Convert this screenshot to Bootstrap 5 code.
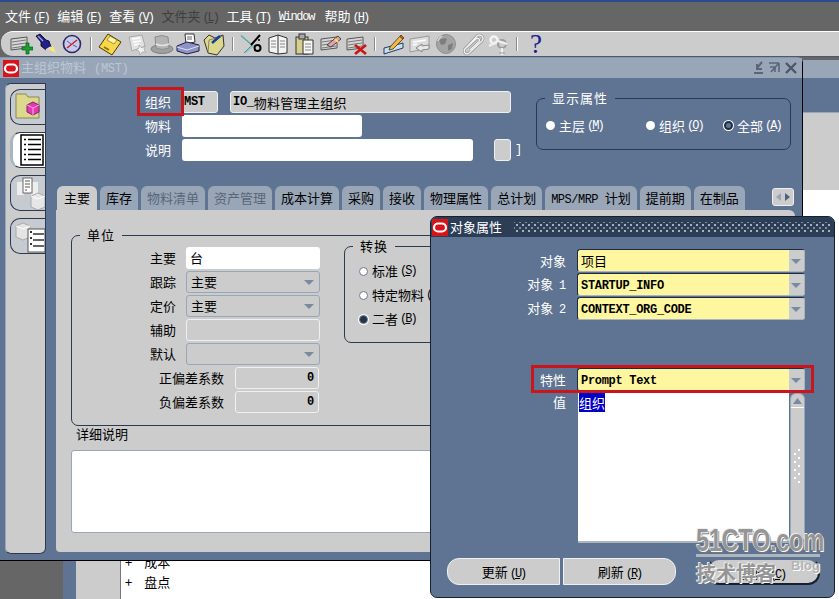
<!DOCTYPE html>
<html lang="zh-CN">
<head>
<meta charset="UTF-8">
<title>主组织物料 (MST)</title>
<link href="https://cdn.jsdelivr.net/npm/bootstrap@5.3.0/dist/css/bootstrap.min.css" rel="stylesheet">
<style>
    html, body { margin: 0; background: #666; }
    body { font: 13px/1.2 "Noto Sans CJK SC", "Liberation Sans", sans-serif; color: #000; }
    .stage { position: relative; width: 839px; height: 599px; overflow: hidden; background: #666; }
    .lat { font-family: "Liberation Mono", "Noto Sans CJK SC", monospace; font-size: 12px; letter-spacing: -.3px; }
    .latb { font-weight: 700; }
    .hk { font-family: "Liberation Mono", monospace; font-size: 12px; letter-spacing: -2px; margin-left: 2px; }

    /* top bars */
    .menubar { height: 31px; border-top: 2px solid #2a4a8c; background: #666; color: #fff; padding-left: 5px; gap: 8.5px; }
    .menubar .off { color: #3e3e3e; }
    .menubar .win { font-family: "Liberation Mono", monospace; font-size: 12px; letter-spacing: -1.3px; padding-top: 2px; margin-right: 2px; }
    .toolstrip { height: 26px; margin-left: 1px; padding-left: 6px; background: #ccc; border-top: 1px solid #fff; border-bottom: 1px solid #4b5a70; border-radius: 12px 0 0 12px; }
    .tool { width: 26px; height: 24px; flex: none; }
    .toolsep { width: 12px; height: 24px; flex: none; position: relative; }
    .toolsep::after { content: ""; position: absolute; left: 5px; top: 5px; height: 14px; width: 2px; background: #fff; border-left: 1px solid #8a8a8a; }
    .helpmark { width: 26px; text-align: center; font: 27px/24px "Liberation Serif", serif; color: #1c1c8e; }

    /* windows on the desktop */
    .backwin { position: absolute; left: 63px; top: 57px; width: 776px; height: 542px; }
    .backtitle { height: 21px; background: #98a6b8; border-top: 3px solid #666; }
    .backblue { height: 35px; background: #5f7492; border-bottom: 1px solid #98a6b8; }
    .backgray { height: 77px; background: #ccc; }
    .backrest { height: 409px; }
    .backrest .b1 { width: 13px; background: #5f7492; }
    .backrest .b2 { width: 45px; background: #ccc; border-right: 1px solid #777; }
    .backrest .b3 { flex: 1; background: #fff; padding-bottom: 7px; }
    .treerow { height: 20px; padding-left: 4px; gap: 12px; }

    .mainwin { position: absolute; left: 0; top: 57px; width: 803px; height: 504px; background: #5f7492; border-right: 1px solid #000; border-bottom: 1px solid #000; border-top: 1px solid #8796ab; border-radius: 0 6px 0 0; }
    .mtitle { height: 20px; background: #98a6b8; color: #bcc6d3; padding-left: 3px; gap: 2px; }
    .oralogo { width: 16px; height: 17px; background: #d6141a; flex: none; }
    .sidestrip { width: 41px; height: 471px; margin: 5px 0 0 5px; background: #ccc; border: 1px solid #2b3a50; border-left-color: #98a6b8; border-radius: 6px 0 6px 6px; padding: 5px 0 0 4px; gap: 7px; flex: none; }
    .sidetab { height: 36px; background: #c6cbd1; border: 1px solid #2b3a50; border-right: 0; border-radius: 10px 0 0 10px; overflow: hidden; }
    .sidetab.cur { background: #fff; border-left: 3px solid #aab4c0; }
    .rightcol { width: 744px; margin-left: 10px; flex: none; }
    .headarea { height: 108px; }
    .headform { width: 399px; padding: 13px 0 0 0; margin-left: 81px; gap: 2px; flex: none; }
    .headrow { height: 22px; }
    .headlbl { width: 45px; padding-left: 8px; color: #fff; flex: none; }
    .fld { height: 22px; border-radius: 3px; padding: 0 4px; flex: none; overflow: hidden; white-space: nowrap; }
    .f-ro { background: #ccc; border: 1px solid #eef0f2; }
    .f-white { background: #fff; }
    .f-drop { background: #ccc; border: 1px solid #98a6b8; position: relative; }
    .f-drop::after, .yarrow::after { content: ""; position: absolute; right: 5px; top: 8px; border: 5px solid transparent; border-top: 5px solid #7889a0; border-bottom: 0; }
    .w-org { width: 36px; padding-left: 1px; }
    .w-orgname { width: 281px; margin-left: 12px; padding-left: 2px; }
    .cjk-sp { font: 13px "Noto Sans CJK SC", sans-serif; letter-spacing: .3px; }
    .w-item { width: 180px; }
    .w-desc { width: 291px; }
    .w-flex { width: 17px; margin-left: 21px; }
    .w-unit { width: 134px; }
    .w-num { width: 84px; margin-left: 1px; }
    .propbox { position: relative; width: 255px; height: 52px; margin: 20px 0 0 0; border: 1px solid #2b3a50; border-radius: 7px; color: #fff; padding: 19px 0 0 9px; }
    .boxcap { position: absolute; left: 8px; top: -10px; padding: 0 7px; line-height: 18px; letter-spacing: 1px; }
    .propbox .boxcap { background: #5f7492; }
    .opt1 { width: 100px; }
    .opt2 { width: 78px; }
    .rad { width: 9px; height: 9px; border-radius: 50%; background: #fff; flex: none; margin-right: 4px; }
    .rad.on { background: #24344c; box-shadow: 0 0 0 1px #fff; }
    .propbox .rad.on { background: #5f7492; border: 2px solid #1d2b40; box-shadow: 0 0 0 1px #fff; }
    .gr .rad { border: 1px solid #6f7c8c; background: #fff; }
    .gr .rad.on { background: #24344c; box-shadow: inset 0 0 0 1px #24344c, 0 0 0 1px #fff; }

    .nav.tabrow { gap: 3px; height: 24px; padding-left: 1px; border: 0; flex-wrap: nowrap; }
    .tabrow .nav-link { height: 24px; padding: 3px 6px 0; margin: 0; background: #98a6b8; color: #000; border: 0; border-radius: 6px 6px 0 0; font-size: 13px; line-height: 18px; white-space: nowrap; }
    .tabrow .nav-link.active { background: #ccc; color: #000; padding: 3px 7px 0; }
    .nav-tabs.tabrow .nav-link.disabled { background: #98a6b8; color: #5a6678; }
    .mrp { letter-spacing: -.5px; }
    .tabscroll { width: 22px; height: 18px; margin: 2px 0 0 24px; background: #ccc; border: 1px solid #eef0f2; border-radius: 3px; flex: none; }
    .tabpanel { width: 739px; height: 342px; background: #ccc; border-radius: 0 6px 0 4px; padding: 25px 0 0 15px; }
    .gr { position: relative; border: 1px solid #2b3a50; border-radius: 7px; }
    .gr .boxcap { background: #ccc; }
    .unitbox { width: 724px; height: 191px; padding: 11px 0 0 0; }
    .urow { height: 22px; gap: 10px; margin-bottom: 2px; }
    .ulbl { width: 104px; text-align: right; flex: none; }
    .ulbl2 { width: 152px; text-align: right; flex: none; }
    .convbox { width: 300px; height: 97px; margin: -1px 0 0 24px; padding: 15px 0 0 14px; }
    .convrow { height: 18px; margin-bottom: 6px; }
    .notelbl { height: 18px; margin: 0 0 6px 5px; }
    .notearea { width: 719px; height: 83px; background: #fff; border: 1px solid #98a6b8; border-radius: 3px; }

    .dialog { position: absolute; left: 430px; top: 216px; width: 405px; height: 382px; background: #5f7492; border: 1px solid #16202e; border-radius: 7px; overflow: hidden; }
    .dtitle { height: 20px; background: #2c3e55; color: #fff; gap: 2px; padding-left: 1px; }
    .dots { flex: 1; height: 10px; margin: 0 4px 0 10px; background-image: radial-gradient(circle, #a8b0ba 0.9px, transparent 1.1px), radial-gradient(circle, #7e8a99 0.9px, transparent 1.1px); background-size: 6px 6px; background-position: 0 0, 3px 3px; }
    .dbody { padding-top: 12px; }
    .drow { height: 23px; margin-bottom: 1px; gap: 11px; }
    .drow-gap { margin-top: 48px; }
    .dlbl { width: 135px; text-align: right; color: #fff; flex: none; }
    .dlbl .lat { margin-left: 3px; }
    .yfld { position: relative; width: 228px; height: 23px; background: #fff7a0; border: 1px solid #1d2b40; border-bottom-color: #aab4c0; border-right-color: #aab4c0; border-radius: 3px; padding-left: 3px; overflow: hidden; }
    .yfld.lat { padding-top: 3px; }
    .yarrow { position: absolute; right: 0; top: 0; width: 15px; height: 23px; background: #ccc; }
    .yarrow::after { right: 3px; top: 9px; }
    .valrow { gap: 12px; margin-top: 2px; }
    .valrow .dlbl { padding-top: 1px; }
    .valarea { width: 211px; height: 150px; background: #fff; padding: 0 0 0 1px; border-bottom: 2px solid #aab4c0; flex: none; }
    .selval { background: #0000c8; color: #fff; display: inline-block; line-height: 19px; }
    .scrollcol { width: 15px; height: 147px; background: #ccc; border: 1px solid #98a6b8; border-radius: 6px 6px 0 0; margin-left: 1px; flex: none; }
    .scrolltop { height: 14px; border-bottom: 1px solid #fff; }
    .grip { margin-top: 41px; }
    .dbtnrow { padding: 15px 0 0 16px; }
    .dbtn.btn { height: 27px; width: 113px; padding: 0; background: #ccc; color: #000; border: 1px solid #eef0f2; font-size: 13px; line-height: 25px; }
    .btn-l { border-radius: 12px 0 0 12px; }
    .btn-r { border-radius: 0 12px 12px 0; margin-left: 3px; }
    .btn.btn-x { border-radius: 12px; margin-left: 31px; border: 2px solid #16202e; border-top-color: #5f7492; }

    .redmark { position: absolute; border: 3px solid #c8161c; pointer-events: none; }
    .rm1 { left: 137px; top: 87px; width: 47px; height: 29px; }
    .rm2 { left: 531px; top: 365px; width: 283px; height: 28px; }
    .wm { position: absolute; left: 696px; top: 526px; width: 124px; color: #959595; font-family: "Liberation Sans", sans-serif; font-weight: 700; pointer-events: none; }
    .wm1 { font-size: 32px; line-height: 28px; letter-spacing: -.5px; transform: scaleX(.74); transform-origin: left center; text-shadow: 1px 1px 0 #fff, -1px -1px 0 #eee, 2px 2px 0 #777; white-space: nowrap; }
    .wmline { height: 3px; background: #aeb6c0; margin-top: 0; }
    .wm2 { position: relative; font: 700 20px/26px "Noto Sans CJK SC", sans-serif; text-shadow: 1px 1px 0 #fff, -1px -1px 0 #eee; margin-top: 3px; white-space: nowrap; letter-spacing: 0; }
    .wmblog { position: absolute; right: 0; top: -3px; font: 700 13px/18px "Liberation Sans", sans-serif; color: #b4b4b4; text-shadow: 1px 1px 0 #fff; }
</style>
</head>
<body>
<svg width="0" height="0" class="position-absolute">
    <symbol id="sheet" viewBox="0 0 26 24"><path d="M4 7 L20 5 V16 L4 18Z" fill="#d6d6d6" stroke="#555"/><path d="M5 10 L19 8 M5 13 L19 11 M5 16 L19 14" stroke="#777"/></symbol>
</svg>
<div class="stage">
    <div class="menubar d-flex align-items-center">
        <span>文件<span class="hk">(<u>F</u>)</span></span>
        <span>编辑<span class="hk">(<u>E</u>)</span></span>
        <span>查看<span class="hk">(<u>V</u>)</span></span>
        <span class="off">文件夹<span class="hk">(<u>L</u>)</span></span>
        <span>工具<span class="hk">(<u>T</u>)</span></span>
        <span class="win"><u>W</u>indow</span>
        <span>帮助<span class="hk">(<u>H</u>)</span></span>
    </div>
    <div class="toolstrip d-flex align-items-center">
        <svg class="tool" viewBox="0 0 26 24"><use href="#sheet"/><path d="M19 11h3v4h4v3h-4v4h-3v-4h-4v-3h4z" fill="#18a030" stroke="#0a5a18" stroke-width=".7"/></svg>
        <svg class="tool" viewBox="0 0 26 24"><path d="M15 17 L23 21 L20 14Z" fill="#ffe96a"/><path d="M3 4 L7 2 L13 8 L16 9 L18 15 L13 18 L8 14 L8 10Z" fill="#20208a" stroke="#000" stroke-width=".8"/><path d="M5 4 L10 9" stroke="#9aa6e8" stroke-width="1.4"/><path d="M13 18 L18 15" stroke="#ddd" stroke-width="1.6"/></svg>
        <svg class="tool" viewBox="0 0 26 24"><circle cx="13" cy="12" r="8.5" fill="#c8cce8" stroke="#2a2a6a" stroke-width="1.6"/><path d="M8 16 L18 8" stroke="#d02030" stroke-width="1.6"/><path d="M8 9 L12 12 M14 13 L18 15" stroke="#5a5a9a"/></svg>
        <span class="toolsep"></span>
        <svg class="tool" viewBox="0 0 26 24"><path d="M11 2 L24 10 L15 23 L2 15Z" fill="#f8d84a" stroke="#4a3a00"/><path d="M13 4 L20 8 L17 12 L10 8Z" fill="#fff3a8" stroke="#6a5a10" stroke-width=".6"/><path d="M7 15 L12 18" stroke="#8a7410" stroke-width="2"/></svg>
        <svg class="tool" viewBox="0 0 26 24"><path d="M6 5 L19 3 L22 14 L9 19Z" fill="#e2e2e2" stroke="#aaa"/><path d="M9 7l8-1M10 10l8-1M11 13l5-1" stroke="#fff" stroke-width="1.4"/><path d="M16 13l3 3 3-2-1 4 2 2-4 0-2 3-1-4-3-1 3-2z" fill="#f2f2f2" stroke="#999" stroke-width=".6"/></svg>
        <svg class="tool" viewBox="0 0 26 24"><ellipse cx="13" cy="17" rx="11" ry="4.5" fill="#a0a0a0" stroke="#808080"/><path d="M6 5 Q13 2 19 5 L20 16 Q13 19 7 16Z" fill="#b4b4b4" stroke="#8c8c8c"/><path d="M7 12 Q13 15 20 12" stroke="#e4e4e4" stroke-width="1.5" fill="none"/></svg>
        <svg class="tool" viewBox="0 0 26 24"><path d="M10 2 L19 2 L20 10 L11 12Z" fill="#fff" stroke="#333"/><path d="M12 5h5M12 7h5" stroke="#666"/><path d="M2 14 L12 10 L24 13 L24 19 L12 22 L2 19Z" fill="#8f93c4" stroke="#1c1c50"/><path d="M2 15 L12 18 L24 14" stroke="#e0e0f0" fill="none"/></svg>
        <svg class="tool" viewBox="0 0 26 24"><path d="M3 8 L8 3 L14 6 L22 3 L23 14 L16 23 L7 21Z" fill="#dcd88e" stroke="#333"/><path d="M7 21 L8 8 L22 4" stroke="#8c8850" fill="none"/><path d="M11 11 L19 4" stroke="#1a3c9a" stroke-width="2.6"/></svg>
        <span class="toolsep"></span>
        <svg class="tool" viewBox="0 0 26 24"><path d="M2 3 L14 14 L6 21" stroke="#7fc8c8" stroke-width="1.6" fill="none"/><path d="M2 4 L13 13 L5 21" stroke="#2a6a70" stroke-width=".6" fill="none"/><path d="M21 3 L12 13" stroke="#000" stroke-width="2"/><circle cx="18.500" cy="16" r="3" fill="none" stroke="#000" stroke-width="2"/><circle cx="20" cy="8" r="1" fill="#000"/></svg>
        <svg class="tool" viewBox="0 0 26 24"><path d="M4 6 L13 3 L22 6 V21 L13 22 L4 20Z" fill="#f4f4f4" stroke="#333"/><path d="M13 3 V22" stroke="#333"/><path d="M6 9h5M6 12h5M6 15h5M15 9h5M15 12h5M15 15h5" stroke="#888"/></svg>
        <svg class="tool" viewBox="0 0 26 24"><rect x="5" y="5" width="12" height="17" fill="#d6d08a" stroke="#333"/><rect x="8" y="2" width="6" height="5" fill="#aaa" stroke="#333"/><path d="M12 8 H22 V22 H12Z" fill="#f6f6f6" stroke="#333"/><path d="M14 12h6M14 15h6M14 18h6" stroke="#888"/></svg>
        <svg class="tool" viewBox="0 0 26 24"><use href="#sheet"/><path d="M10 13 L21 4 L24 7 L14 15Z" fill="#e8a0a8" stroke="#444"/><path d="M18 7 L21 10" stroke="#ffe050" stroke-width="2"/></svg>
        <svg class="tool" viewBox="0 0 26 24"><use href="#sheet"/><path d="M12 13 L23 22 M23 13 L12 22" stroke="#c81818" stroke-width="2.8"/></svg>
        <span class="toolsep"></span>
        <svg class="tool" viewBox="0 0 26 24"><path d="M3 16 L22 11 V16 L3 22Z" fill="#c8e0e8" stroke="#1c3c6a"/><path d="M9 15 L20 3 L23 6 L12 17 L8 18Z" fill="#f4b840" stroke="#333" stroke-width=".8"/><path d="M19 4 L22 7" stroke="#a04010" stroke-width="1.6"/></svg>
        <svg class="tool" viewBox="0 0 26 24"><path d="M3 7 L22 4 V16 L3 20Z" fill="#dcdcdc" stroke="#999"/><path d="M6 10 L19 8 M6 13 L10 12" stroke="#fff" stroke-width="1.4"/><path d="M9 16 L15 12 V14 L22 13 V17 L15 18 V20Z" fill="#e8e8e8" stroke="#888"/></svg>
        <svg class="tool" viewBox="0 0 26 24"><circle cx="13" cy="12" r="9.500" fill="#a4a4a4" stroke="#8e8e8e"/><path d="M6 8 Q11 5 14 7 L12 12 L8 13Z M15 13 L20 11 L19 17 L15 19Z" fill="#7e7e7e"/><path d="M9 4 Q6 6 5 9" stroke="#ddd" stroke-width="1.5" fill="none"/></svg>
        <svg class="tool" viewBox="0 0 26 24"><path d="M5 18 L18 4 A3.500 3.500 0 0 1 23 9 L10 21 A2.800 2.800 0 0 1 6 17 L17 7 A1.700 1.700 0 0 1 20 9.500 L11 18" fill="none" stroke="#8c8c8c" stroke-width="2.600"/><path d="M5 18 L18 4 A3.500 3.500 0 0 1 23 9 L10 21 A2.800 2.800 0 0 1 6 17 L17 7 A1.700 1.700 0 0 1 20 9.500 L11 18" fill="none" stroke="#f2f2f2" stroke-width="1.400"/></svg>
        <svg class="tool" viewBox="0 0 26 24"><circle cx="9" cy="8" r="3.500" fill="none" stroke="#f4f4f4" stroke-width="2.500"/><circle cx="17" cy="12" r="4" fill="none" stroke="#9c9c9c" stroke-width="2"/><path d="M4 14 L13 9 L22 12 M17 16 V23" stroke="#f0f0f0" stroke-width="2.200" fill="none"/><path d="M14 21h6" stroke="#999"/></svg>
        <span class="toolsep"></span>
        <span class="helpmark">?</span>
    </div>

    <div class="backwin">
        <div class="backtitle"></div>
        <div class="backblue"></div>
        <div class="backgray"></div>
        <div class="backrest d-flex">
            <div class="b1"></div>
            <div class="b2"></div>
            <div class="b3 d-flex flex-column justify-content-end">
                <div class="treerow d-flex align-items-center"><span>+</span><span>成本</span></div>
                <div class="treerow d-flex align-items-center"><span>+</span><span>盘点</span></div>
            </div>
        </div>
    </div>

    <div class="mainwin">
        <div class="mtitle d-flex align-items-center">
            <svg class="oralogo" viewBox="0 0 16 17"><rect x="2" y="4.500" width="12" height="8" rx="4" fill="none" stroke="#fff" stroke-width="2.200"/></svg>
            <span>主组织物料<span class="lat ms-2">(MST)</span></span>
            <svg class="ms-auto me-1" width="46" height="16" viewBox="0 0 46 16"><path d="M2 13h9M10 2 L5 8M5 4v5h5" stroke="#5a6678" stroke-width="2" fill="none"/><path d="M18 3h10M28 3v9M27 4 L20 12M19 7h5v5" stroke="#5a6678" stroke-width="1.600" fill="none" transform="translate(-1 0)"/><path d="M34 3 L44 13M44 3 L34 13" stroke="#4b5666" stroke-width="2.400"/></svg>
        </div>
        <div class="d-flex">
            <div class="sidestrip d-flex flex-column">
                <div class="sidetab">
                    <svg width="36" height="34" viewBox="0 0 36 34"><path d="M5 8 L5 4 L15 4 L17 7 L28 7 V28 H5Z" fill="#dcd88e" stroke="#8c8850"/><path d="M16 15 L22 12 L28 15 V22 L22 25 L16 22Z" fill="#e838b0" stroke="#7a2070"/><path d="M16 15 L22 18 L28 15 M22 18 V25" stroke="#f8b0e0" fill="none"/></svg>
                </div>
                <div class="sidetab cur">
                    <svg width="33" height="34" viewBox="0 0 33 34"><rect x="8" y="2" width="22" height="30" fill="#fff" stroke="#000" stroke-width="1.500"/><path d="M11 6.500h2M15 6.500h13M11 11.500h2M15 11.500h13M11 16.500h2M15 16.500h13M11 21.500h2M15 21.500h13M11 26.500h2M15 26.500h13" stroke="#000" stroke-width="1.400"/></svg>
                </div>
                <div class="sidetab">
                    <svg width="36" height="34" viewBox="0 0 36 34"><rect x="6" y="6" width="7" height="13" fill="#eee"/><rect x="20" y="6" width="7" height="13" fill="#eee"/><rect x="12" y="2" width="9" height="15" fill="#fff" stroke="#666"/><path d="M14 5h5M14 8h5M14 11h5M14 14h2" stroke="#555"/><path d="M20 20 L27 17 L34 20 V31 L27 34 L20 31Z" fill="#e6e6e6" stroke="#aaa"/><path d="M20 20 L27 23 L34 20" stroke="#fff" fill="none"/></svg>
                </div>
                <div class="sidetab">
                    <svg width="36" height="34" viewBox="0 0 36 34"><path d="M5 7 L12 4 L19 7 V18 L12 21 L5 18Z" fill="#e4e4e4" stroke="#aaa"/><path d="M5 7 L12 10 L19 7" stroke="#fff" fill="none"/><rect x="17" y="10" width="17" height="23" fill="#fff" stroke="#555"/><path d="M22 15h11M22 21h11M22 27h11" stroke="#333" stroke-width="1.300"/><path d="M19 13h2M19 19h2M19 25h2" stroke="#333" stroke-width="2"/></svg>
                </div>
            </div>
            <div class="rightcol">
                <div class="headarea d-flex">
                    <div class="headform d-flex flex-column">
                        <div class="headrow d-flex align-items-center">
                            <span class="headlbl">组织</span>
                            <div class="fld f-ro w-org d-flex align-items-center lat latb">MST</div>
                            <div class="fld f-ro w-orgname d-flex align-items-center lat latb">IO_<span class="cjk-sp">物料管理主组织</span></div>
                        </div>
                        <div class="headrow d-flex align-items-center">
                            <span class="headlbl">物料</span>
                            <div class="fld f-white w-item"></div>
                        </div>
                        <div class="headrow d-flex align-items-center">
                            <span class="headlbl">说明</span>
                            <div class="fld f-white w-desc"></div>
                            <div class="fld f-ro w-flex"></div>
                            <span class="ms-1 text-white lat">]</span>
                        </div>
                    </div>
                    <div class="propbox d-flex align-items-start">
                        <span class="boxcap">显示属性</span>
                        <div class="opt1 d-flex align-items-center"><span class="rad"></span>主层<span class="hk">(<u>M</u>)</span></div>
                        <div class="opt2 d-flex align-items-center"><span class="rad"></span>组织<span class="hk">(<u>O</u>)</span></div>
                        <div class="d-flex align-items-center"><span class="rad on"></span>全部<span class="hk">(<u>A</u>)</span></div>
                    </div>
                </div>
                <ul class="nav nav-tabs tabrow">
                    <li class="nav-item"><a class="nav-link active" href="#">主要</a></li>
                    <li class="nav-item"><a class="nav-link" href="#">库存</a></li>
                    <li class="nav-item"><a class="nav-link disabled" href="#">物料清单</a></li>
                    <li class="nav-item"><a class="nav-link disabled" href="#">资产管理</a></li>
                    <li class="nav-item"><a class="nav-link" href="#">成本计算</a></li>
                    <li class="nav-item"><a class="nav-link" href="#">采购</a></li>
                    <li class="nav-item"><a class="nav-link" href="#">接收</a></li>
                    <li class="nav-item"><a class="nav-link" href="#">物理属性</a></li>
                    <li class="nav-item"><a class="nav-link" href="#">总计划</a></li>
                    <li class="nav-item"><a class="nav-link" href="#"><span class="lat mrp">MPS/MRP </span>计划</a></li>
                    <li class="nav-item"><a class="nav-link" href="#">提前期</a></li>
                    <li class="nav-item"><a class="nav-link" href="#">在制品</a></li>
                    <li class="tabscroll d-flex align-items-center justify-content-center">
                        <svg width="14" height="8" viewBox="0 0 14 8"><path d="M5 0 V8 L0 4Z" fill="#98a6b8"/><path d="M9 0 V8 L14 4Z" fill="#4f6078"/></svg>
                    </li>
                </ul>
                <div class="tabpanel">
                    <div class="gr unitbox d-flex">
                        <span class="boxcap">单位</span>
                        <div>
                            <div class="urow d-flex align-items-center"><span class="ulbl">主要</span><div class="fld f-white w-unit d-flex align-items-center">台</div></div>
                            <div class="urow d-flex align-items-center"><span class="ulbl">跟踪</span><div class="fld f-drop w-unit d-flex align-items-center">主要</div></div>
                            <div class="urow d-flex align-items-center"><span class="ulbl">定价</span><div class="fld f-drop w-unit d-flex align-items-center">主要</div></div>
                            <div class="urow d-flex align-items-center"><span class="ulbl">辅助</span><div class="fld f-ro w-unit"></div></div>
                            <div class="urow d-flex align-items-center"><span class="ulbl">默认</span><div class="fld f-drop w-unit"></div></div>
                            <div class="urow d-flex align-items-center"><span class="ulbl2">正偏差系数</span><div class="fld f-ro w-num d-flex align-items-center justify-content-end lat latb">0</div></div>
                            <div class="urow d-flex align-items-center"><span class="ulbl2">负偏差系数</span><div class="fld f-ro w-num d-flex align-items-center justify-content-end lat latb">0</div></div>
                        </div>
                        <div class="gr convbox">
                            <span class="boxcap">转换</span>
                            <div class="convrow d-flex align-items-center"><span class="rad"></span>标准<span class="hk">(<u>S</u>)</span></div>
                            <div class="convrow d-flex align-items-center"><span class="rad"></span>特定物料<span class="hk">(<u>I</u>)</span></div>
                            <div class="convrow d-flex align-items-center"><span class="rad on"></span>二者<span class="hk">(<u>B</u>)</span></div>
                        </div>
                    </div>
                    <div class="notelbl">详细说明</div>
                    <div class="notearea"></div>
                </div>
            </div>
        </div>
    </div>

    <div class="dialog">
        <div class="dtitle d-flex align-items-center">
            <svg class="oralogo" viewBox="0 0 16 17"><rect x="2" y="4.500" width="12" height="8" rx="4" fill="none" stroke="#fff" stroke-width="2.200"/></svg>
            <span>对象属性</span>
            <div class="dots"></div>
        </div>
        <div class="dbody">
            <div class="drow d-flex align-items-center"><span class="dlbl">对象</span><div class="yfld d-flex align-items-center">项目<span class="yarrow"></span></div></div>
            <div class="drow d-flex align-items-center"><span class="dlbl">对象 <span class="lat">1</span></span><div class="yfld d-flex align-items-center lat latb">STARTUP_INFO<span class="yarrow"></span></div></div>
            <div class="drow d-flex align-items-center"><span class="dlbl">对象 <span class="lat">2</span></span><div class="yfld d-flex align-items-center lat latb">CONTEXT_ORG_CODE<span class="yarrow"></span></div></div>
            <div class="drow drow-gap d-flex align-items-center"><span class="dlbl">特性</span><div class="yfld d-flex align-items-center lat latb">Prompt Text<span class="yarrow"></span></div></div>
            <div class="valrow d-flex align-items-start">
                <span class="dlbl">值</span>
                <div class="d-flex">
                    <div class="valarea"><span class="selval">组织</span></div>
                    <div class="scrollcol d-flex flex-column">
                        <div class="scrolltop d-flex justify-content-center align-items-center">
                            <svg width="9" height="6" viewBox="0 0 9 6"><path d="M0 6 L4.500 0 L9 6Z" fill="#7889a0"/></svg>
                        </div>
                        <svg class="grip mx-auto" width="9" height="34" viewBox="0 0 9 34"><path d="M5 1h2M1 5h2M5 9h2M1 13h2M5 17h2M1 21h2M5 25h2M1 29h2M5 33h2" stroke="#fff" stroke-width="2"/></svg>
                    </div>
                </div>
            </div>
            <div class="dbtnrow d-flex">
                <button type="button" class="btn dbtn btn-l">更新<span class="hk">(<u>U</u>)</span></button>
                <button type="button" class="btn dbtn btn-r">刷新<span class="hk">(<u>R</u>)</span></button>
                <button type="button" class="btn dbtn btn-x">关闭<span class="hk">(<u>C</u>)</span></button>
            </div>
        </div>
    </div>

    <div class="redmark rm1"></div>
    <div class="redmark rm2"></div>

    <div class="wm">
        <div class="wm1">51CTO.com</div>
        <div class="wmline"></div>
        <div class="wm2">技术博客<span class="wmblog">Blog</span></div>
    </div>
</div>
</body>
</html>
